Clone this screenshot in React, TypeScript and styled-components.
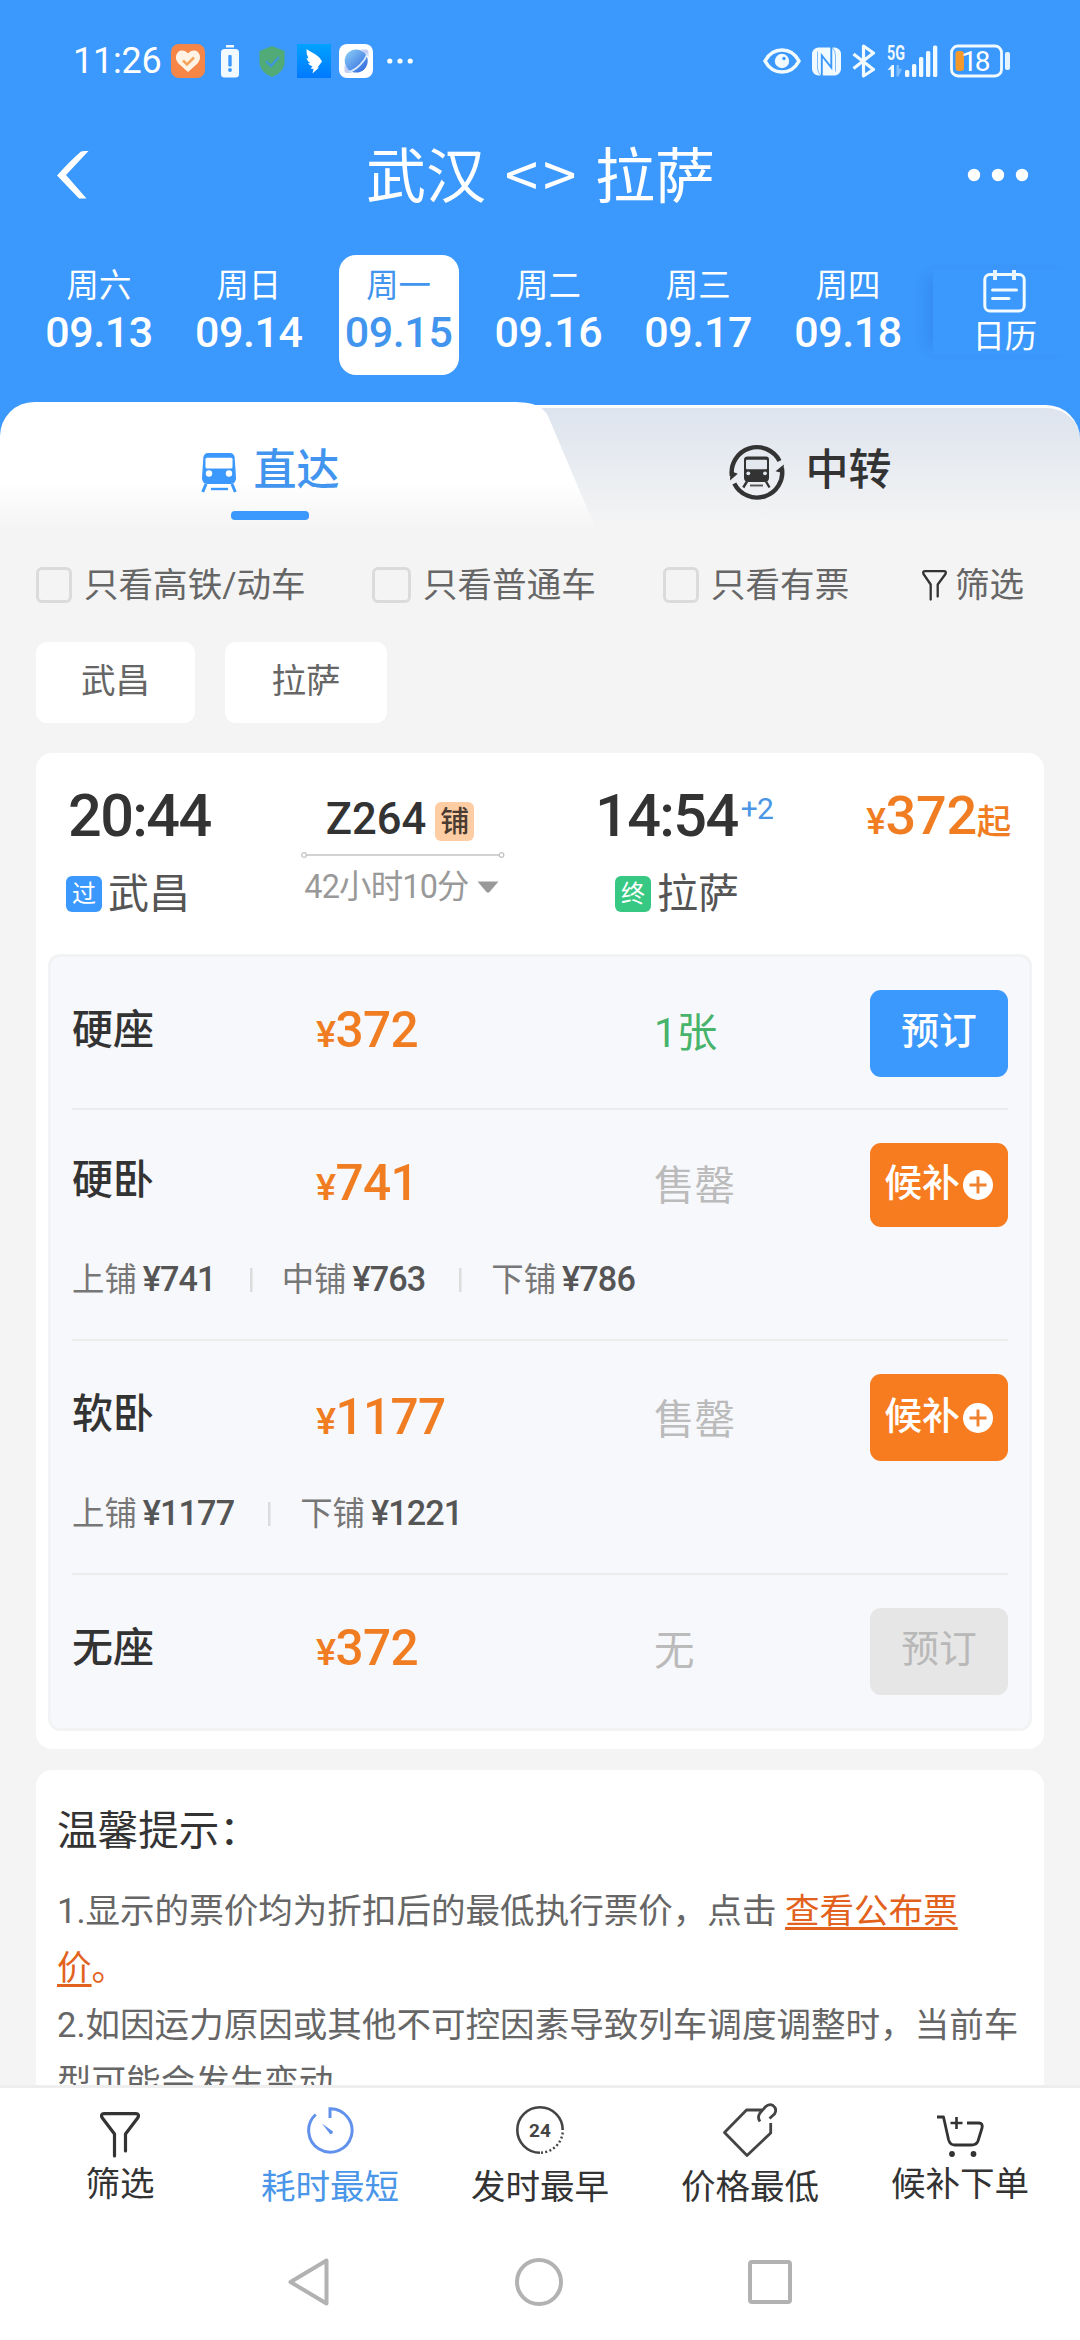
import React from 'react';
import styled, { createGlobalStyle, css } from 'styled-components';

const BLUE = '#3b98fc';
const ORANGE = '#f07d22';

const GlobalStyle = createGlobalStyle`
  * { box-sizing: border-box; }
  body { margin: 0; background: #f4f4f4; }
  svg { display: block; flex: none; }
`;

const Screen = styled.div`
  width: 1080px;
  height: 2340px;
  display: flex;
  flex-direction: column;
  overflow: hidden;
  background: #f4f4f4;
  color: #333;
  font-family: Roboto, 'Noto Sans CJK SC', sans-serif;
`;

/* ---------- header ---------- */

const Header = styled.header`
  flex: none;
  height: 402px;
  background: ${BLUE};
  color: #fff;
`;

const StatusBar = styled.div`
  height: 122px;
  padding: 0 70px 0 73px;
  display: flex;
  align-items: center;
  justify-content: space-between;
`;

const StatusGroup = styled.div<{ $gap: number }>`
  display: flex;
  align-items: center;
  gap: ${(p) => p.$gap}px;
`;

const AlertGroup = styled(StatusGroup)`
  margin: 0 4px 0 8px;
`;

const Clock = styled.span`
  width: 90px;
  font-size: 36px;
  line-height: 40px;
  letter-spacing: -0.2px;
`;

const TitleBar = styled.div`
  height: 106px;
  padding: 0 51px 0 57px;
  display: flex;
  align-items: center;
  justify-content: space-between;
`;

const Title = styled.h1`
  margin: 0 0 0 24px;
  font-size: 60px;
  line-height: 80px;
  font-weight: 400;
  white-space: nowrap;
`;

const Angles = styled.span`
  display: inline-block;
  width: 109px;
  text-align: center;
  font-family: 'Noto Sans CJK SC', sans-serif;
  letter-spacing: 5px;
  text-indent: 5px;
`;

const DateStrip = styled.div`
  margin-top: 27px;
  padding-left: 39px;
  display: flex;
  align-items: flex-start;
  gap: 29.8px;
`;

const DateItem = styled.div<{ $active?: boolean }>`
  flex: none;
  width: 120px;
  height: 120px;
  padding-top: 13px;
  border-radius: 17px;
  display: flex;
  flex-direction: column;
  align-items: center;
  gap: 3px;
  background: ${(p) => (p.$active ? '#fff' : 'transparent')};
  color: ${(p) => (p.$active ? '#4295ee' : '#fff')};
`;

const Weekday = styled.span`
  font-size: 32.4px;
  line-height: 36px;
`;

const DayNumber = styled.span`
  font-size: 43px;
  line-height: 50px;
  font-weight: 500;
  letter-spacing: -0.4px;
`;

const CalendarButton = styled.div`
  flex: none;
  width: 144px;
  height: 84px;
  margin: 15px 0 0 -5px;
  display: flex;
  flex-direction: column;
  align-items: center;
  gap: 6px;
  background: ${BLUE};
  box-shadow: -11px 0 14px -7px rgba(20, 60, 160, 0.16);
`;

/* ---------- tabs ---------- */

const Tabs = styled.nav`
  flex: none;
  height: 138px;
  display: flex;
  background: linear-gradient(${BLUE} 60px, #f4f4f4 60px);
`;

const tabBase = css`
  width: 540px;
  position: relative;
  display: flex;
  justify-content: center;
  padding-top: 38px;
  font-size: 43px;
  line-height: 60px;
  font-weight: 500;
`;

const ActiveTab = styled.div`
  ${tabBase}
  z-index: 1;
  color: #4295ee;
  gap: 17px;
  &::before {
    content: '';
    position: absolute;
    z-index: -1;
    left: 0;
    top: 0;
    width: 600px;
    height: 138px;
    background: linear-gradient(#fff 80px, #f4f4f4 128px);
    clip-path: path('M0 138V34A34 34 0 0 1 34 0H512C534 0 542 4 548 14L595 125L600 138Z');
  }
  &::after {
    content: '';
    position: absolute;
    left: 231px;
    top: 109px;
    width: 78px;
    height: 9px;
    border-radius: 4px;
    background: ${BLUE};
  }
`;

const IdleTab = styled.div`
  ${tabBase}
  gap: 21px;
  &::before {
    content: '';
    position: absolute;
    z-index: 0;
    left: -40px;
    right: 0;
    top: 3px;
    height: 135px;
    border-top: 3px solid #fff;
    border-radius: 0 34px 0 0;
    background: linear-gradient(#dde4ee, #f4f4f4 118px);
  }
  > * { position: relative; }
`;

const TabIcon = styled.span<{ $top: number }>`
  padding-top: ${(p) => p.$top}px;
`;

/* ---------- filters ---------- */

const Filters = styled.div`
  flex: none;
  height: 65px;
  padding: 25px 0 0 36px;
  display: grid;
  grid-template-columns: 336px 291px 259px 1fr;
  align-items: center;
  color: #666;
  font-size: 34.56px;
  line-height: 40px;
`;

const CheckOption = styled.label`
  display: flex;
  align-items: center;
  white-space: nowrap;
`;

const CheckBox = styled.i<{ $w: number }>`
  width: ${(p) => p.$w}px;
  height: 36px;
  margin-right: 12px;
  border: 3px solid #dbdbdb;
  border-radius: 6px;
`;

const FilterLink = styled.div`
  display: flex;
  align-items: center;
  gap: 8px;
`;

const Chips = styled.div`
  flex: none;
  margin-top: 37px;
  padding-left: 36px;
  display: flex;
  gap: 30px;
`;

const Chip = styled.div<{ $w: number }>`
  width: ${(p) => p.$w}px;
  height: 81px;
  padding-bottom: 3px;
  border-radius: 11px;
  background: #fff;
  color: #666;
  display: flex;
  align-items: center;
  justify-content: center;
  font-size: 34.56px;
  line-height: 40px;
`;

/* ---------- train card ---------- */

const Card = styled.section`
  flex: none;
  margin: 30px 36px 0;
  height: 996px;
  border-radius: 16px;
  background: #fff;
`;

const TrainHead = styled.div`
  height: 201px;
  padding: 33px 33px 0 30px;
  display: grid;
  grid-template-columns: 235px 203px 87px 220px 1fr;
`;

const Stop = styled.div`
  display: flex;
  flex-direction: column;
  gap: 30px;
`;

const ArriveStop = styled(Stop)`
  grid-column: 4;
`;

const Time = styled.div<{ $indent: number }>`
  display: flex;
  align-items: flex-start;
  padding-left: ${(p) => p.$indent}px;
  font-size: 59.4px;
  line-height: 60px;
  font-weight: 500;
  letter-spacing: -1.6px;
  white-space: nowrap;
`;

const DayOffset = styled.span`
  margin-left: 3px;
  padding-top: 5px;
  color: #4a96e4;
  font-size: 30px;
  line-height: 36px;
  font-weight: 400;
  letter-spacing: -0.8px;
`;

const Station = styled.div<{ $indent?: number }>`
  height: 36px;
  padding-left: ${(p) => p.$indent ?? 0}px;
  display: flex;
  align-items: center;
  gap: 6px;
  color: #555;
  font-size: 41px;
  line-height: 38px;
`;

const StationBadge = styled.span<{ $color: string }>`
  width: 36px;
  height: 36px;
  border-radius: 6px;
  background: ${(p) => p.$color};
  color: #fff;
  font-size: 24px;
  line-height: 37px;
  text-align: center;
`;

const Middle = styled.div`
  display: flex;
  flex-direction: column;
  align-items: center;
`;

const TrainNo = styled.div`
  height: 63px;
  padding: 4px 5px 0 0;
  display: flex;
  align-items: center;
  gap: 9px;
  font-size: 43.6px;
  line-height: 50px;
  font-weight: 500;
`;

const BerthBadge = styled.span`
  width: 39px;
  height: 39px;
  margin-top: 3px;
  border-radius: 6px;
  background: #ffcda3;
  color: #4a3c32;
  font-size: 29px;
  line-height: 40px;
  font-weight: 500;
  text-align: center;
`;

const Duration = styled.div`
  padding: 4px 2px 0 0;
  display: flex;
  align-items: center;
  gap: 8px;
  color: #999;
  font-size: 32.4px;
  line-height: 44px;
  letter-spacing: -0.8px;
  white-space: nowrap;
`;

const FromPrice = styled.div`
  display: flex;
  align-items: baseline;
  justify-content: flex-end;
  height: 60px;
  color: ${ORANGE};
  font-size: 54px;
  line-height: 60px;
  font-weight: 500;
  letter-spacing: -0.3px;
  white-space: nowrap;
`;

const PriceUnit = styled.span<{ $size: number }>`
  font-size: ${(p) => p.$size}px;
  font-weight: 500;
`;

/* ---------- seats ---------- */

const SeatPanel = styled.div`
  margin: 0 12px;
  height: 777px;
  padding: 0 21px;
  border: 3px solid #f2f3f5;
  border-radius: 12px;
  background: #f7f8fc;
`;

const SeatRow = styled.div<{ $h: number }>`
  height: ${(p) => p.$h}px;
  padding-top: 33px;
  border-bottom: 2px solid #ececec;
  &:last-child { border-bottom: 0; }
`;

const SeatMain = styled.div<{ $h: number }>`
  height: ${(p) => p.$h}px;
  display: grid;
  grid-template-columns: 244px 338px 1fr 138px;
  align-items: start;
`;

const SeatName = styled.div<{ $top: number }>`
  padding-top: ${(p) => p.$top}px;
  font-size: 41px;
  line-height: 50px;
  font-weight: 500;
`;

const SeatPrice = styled.div<{ $top: number }>`
  padding-top: ${(p) => p.$top}px;
  color: ${ORANGE};
  font-size: 49.5px;
  line-height: 50px;
  font-weight: 500;
  letter-spacing: -0.6px;
`;

const SeatStatus = styled.div<{ $top: number; $available?: boolean }>`
  padding-top: ${(p) => p.$top}px;
  color: ${(p) => (p.$available ? '#47b36b' : '#bbb')};
  font-size: 40.5px;
  line-height: 50px;
`;

type ActionKind = 'book' | 'wait' | 'off';

const actionColors: Record<ActionKind, string> = {
  book: `background: ${BLUE}; color: #fff; padding-bottom: 6px;`,
  wait: 'background: #f67c1f; color: #fff; padding-bottom: 4px;',
  off: 'background: #e6e6e6; color: #b8b8b8; font-weight: 400; padding-bottom: 6px;',
};

const ActionButton = styled.button<{ $kind: ActionKind }>`
  width: 138px;
  height: 100%;
  padding: 0;
  border: 0;
  border-radius: 11px;
  display: flex;
  align-items: center;
  justify-content: center;
  gap: 2px;
  font-family: inherit;
  font-size: 37.8px;
  line-height: 50px;
  font-weight: 500;
  ${(p) => actionColors[p.$kind]}
`;

const PlusMark = styled.svg`
  margin-top: 4px;
`;

const Berths = styled.div`
  margin-top: 30px;
  display: flex;
  align-items: center;
  color: #777;
  font-size: 32.4px;
  line-height: 44px;
`;

const Berth = styled.span`
  display: flex;
  align-items: baseline;
  gap: 6px;
  & + & {
    margin-left: 34px;
    padding-left: 32px;
    background: linear-gradient(#dcdcdc, #dcdcdc) no-repeat 0 50% / 2.5px 24px;
  }
`;

const BerthPrice = styled.b`
  color: #555;
  font-size: 34.2px;
  font-weight: 500;
  letter-spacing: -0.9px;
`;

/* ---------- tips ---------- */

const Tips = styled.section`
  flex: 1;
  min-height: 0;
  overflow: hidden;
  margin: 21px 36px 0;
  padding: 35px 20px 0 21px;
  border-radius: 16px 16px 0 0;
  background: #fff;
`;

const TipsTitle = styled.h2`
  margin: 0 0 26px;
  font-size: 40.6px;
  line-height: 52px;
  font-weight: 400;
  color: #333;
`;

const TipLine = styled.p`
  margin: 0;
  color: #666;
  font-size: 34.56px;
  line-height: 57px;
`;

const TipLink = styled.span`
  color: #e2621d;
`;

const Underlined = styled.span`
  text-decoration: underline;
  text-decoration-thickness: 3px;
  text-underline-offset: 4px;
`;

/* ---------- bottom ---------- */

const SortBar = styled.footer`
  flex: none;
  height: 135px;
  padding: 0 15px;
  border-top: 3px solid #eeeeee;
  background: #fff;
  display: grid;
  grid-template-columns: repeat(5, 210px);
`;

const SortItem = styled.div<{ $active?: boolean; $shift: number }>`
  display: flex;
  flex-direction: column;
  align-items: center;
  color: ${(p) => (p.$active ? '#4a96e8' : '#333')};
  font-size: 34.56px;
  line-height: 40px;
  > span { margin-top: ${(p) => p.$shift}px; }
`;

const SortIcon = styled.div<{ $lift?: number }>`
  height: 70px;
  padding-bottom: ${(p) => p.$lift ?? 0}px;
  display: flex;
  align-items: flex-end;
`;

const SystemNav = styled.div`
  flex: none;
  height: 120px;
  padding: 3px 288px 0 287px;
  background: #fff;
  display: flex;
  justify-content: space-between;
  align-items: center;
`;

/* ---------- icons ---------- */

const HeartApp = () => (
  <svg width="34" height="34" viewBox="0 0 34 34">
    <rect width="34" height="34" rx="8" fill="#f58648" />
    <path d="M17 28L7.500 19.500C2.500 14 5.500 6.500 11 6.500c3 0 5 1.500 6 3 1-1.500 3-3 6-3 5.500 0 8.500 7.500 3.500 13z" fill="#fff3e6" />
    <path d="M12 16.500l4 4 7-7" fill="none" stroke="#f5a45c" strokeWidth="2.600" />
  </svg>
);

const BatteryAlert = () => (
  <svg width="18" height="33" viewBox="0 0 18 33">
    <rect x="5" y="0" width="8" height="2.500" fill="#f0faff" />
    <rect y="4" width="18" height="28.500" rx="3.500" fill="#f0faff" />
    <rect x="7.300" y="10" width="3.400" height="11.500" rx="1" fill={BLUE} />
    <circle cx="9" cy="25" r="1.900" fill={BLUE} />
  </svg>
);

const Shield = () => (
  <svg width="26" height="31" viewBox="0 0 26 31">
    <path d="M13 0L25.500 5v11c0 7-5 12-12.500 15C5.500 28 .5 23 .5 16V5z" fill="#51ab76" />
    <path d="M7 15l5 5 8-9" fill="none" stroke="#3f97d8" strokeWidth="2.400" />
  </svg>
);

const WingApp = () => (
  <svg width="34" height="34" viewBox="0 0 34 34">
    <defs>
      <linearGradient id="wing" x1="0" y1="0" x2="0" y2="1">
        <stop offset="0" stopColor="#00a2ff" />
        <stop offset="1" stopColor="#0079ff" />
      </linearGradient>
    </defs>
    <rect width="34" height="34" fill="url(#wing)" />
    <path d="M9.500 5C15 9 22 11 25 17.500L20.500 23.500H22L15.500 29.500 16.500 25 13.500 24.500 15.500 22.500Q12 21.500 11 19L13.500 19.200Q10 17 9.500 14L11.500 14.500Q9 9.500 9.500 5z" fill="#fff" />
  </svg>
);

const GlobeApp = () => (
  <svg width="34" height="34" viewBox="0 0 34 34">
    <defs>
      <linearGradient id="globe" x1="0" y1="0" x2="1" y2="1">
        <stop offset="0" stopColor="#8fd2f8" />
        <stop offset="1" stopColor="#2b62dc" />
      </linearGradient>
    </defs>
    <rect width="34" height="34" rx="8" fill="#fff" />
    <path d="M22 5.500H27Q29.500 5.500 29.500 8V13zM5.500 21V26.500Q5.500 29 8 29H13z" fill="#c3cdf5" />
    <circle cx="17.200" cy="17" r="11.500" fill="url(#globe)" />
    <path d="M28.500 9.500C26 17 18 25.500 10 28" fill="none" stroke="#d5eafd" strokeWidth="1.800" />
  </svg>
);

const Dots = ({ w, h, r, gap }: { w: number; h: number; r: number; gap: number }) => (
  <svg width={w} height={h} viewBox={`0 0 ${w} ${h}`} fill="#fff">
    {[-1, 0, 1].map((i) => (
      <circle key={i} cx={w / 2 + i * gap} cy={h / 2} r={r} />
    ))}
  </svg>
);

const Eye = () => (
  <svg width="38" height="26" viewBox="0 0 38 26">
    <path d="M2 13C6 5.500 12 2 19 2s13 3.500 17 11c-4 7.500-10 11-17 11S6 20.500 2 13z" fill="none" stroke="#f0faff" strokeWidth="3.600" />
    <circle cx="19" cy="13" r="7.200" fill="#f0faff" />
    <circle cx="21" cy="10.500" r="1.700" fill={BLUE} />
  </svg>
);

const Nfc = () => (
  <svg width="29" height="29" viewBox="0 0 29 29">
    <rect x="0" y="0.500" width="29" height="28" rx="6.500" fill="#f0faff" />
    <path d="M5.500 4.500V21Q5.500 25.500 9.300 29M23.500 24.500V8Q23.500 3.500 19.700 0" fill="none" stroke={BLUE} strokeWidth="0.900" opacity="0.700" />
    <path d="M9.800 29V8.500L19.300 20.500V0" fill="none" stroke={BLUE} strokeWidth="1.900" />
  </svg>
);

const BluetoothIcon = () => (
  <svg width="24" height="34" viewBox="0 0 24 34">
    <path d="M1.500 10L21.500 25.500 11.500 32V2L21.500 9 1.500 24.500" fill="none" stroke="#f0faff" strokeWidth="3.200" strokeLinejoin="round" />
  </svg>
);

const Signal = () => (
  <svg width="52" height="34" viewBox="0 0 52 34">
    <text x="0" y="15.500" fontSize="19.500" fontWeight="700" fill="#f0faff" textLength="18" lengthAdjust="spacingAndGlyphs" fontFamily="Roboto, sans-serif">5G</text>
    <path d="M0.500 26L5 21h2v12H3.800V25.500z" fill="#f0faff" />
    <path d="M9.500 21h2.500v3.500l3 .5-3.500 7.500h-2z" fill="#7bbcff" />
    {[26, 20, 13, 7, 1.5].map((y, i) => (
      <rect key={y} x={18 + i * 7} y={y} width="4.300" height={33 - y} rx="1.500" fill="#f0faff" />
    ))}
  </svg>
);

const Battery = () => (
  <svg width="60" height="34" viewBox="0 0 60 34">
    <rect x="1.500" y="2" width="50" height="30" rx="6.500" fill="none" stroke="#f0faff" strokeWidth="2.800" />
    <rect x="5.500" y="7" width="8.500" height="20" rx="3" fill="#f59a2a" />
    <rect x="55" y="8" width="5" height="18" rx="2" fill="#e4f3ff" />
    <text x="11.500" y="27" fontSize="28" fill="#fff" textLength="29" fontFamily="Roboto, sans-serif">18</text>
  </svg>
);

const BackIcon = () => (
  <svg width="33" height="48" viewBox="0 0 33 48">
    <path d="M27.500 0H31.500L9 24 29.500 47.500H22L0 24.500Q14 9 24 0.500Z" fill="#fff" />
  </svg>
);

const CalendarIcon = () => (
  <svg width="43" height="43" viewBox="0 0 43 43" fill="none" stroke="#f0faff" strokeWidth="3">
    <rect x="1.800" y="4.500" width="39.400" height="36.500" rx="5" />
    <path d="M12 0v10M31 0v10" stroke="#e8f5ff" strokeWidth="4" />
    <path d="M9.500 20h24M9.500 28.500H26" strokeLinecap="round" />
  </svg>
);

const TrainIcon = () => (
  <svg width="36" height="40" viewBox="0 0 36 40">
    <path d="M7 0h22c3 0 4.500 2 4.700 5L35 25c0 3-2 6-5 6H6c-3 0-5-3-5-6L2.300 5C2.500 2 4 0 7 0z" fill={BLUE} />
    <rect x="4.500" y="4.800" width="27" height="10.700" rx="1.500" fill="#fff" />
    <circle cx="8" cy="20.500" r="3.200" fill="#fff" />
    <circle cx="28" cy="20.500" r="3.200" fill="#fff" />
    <path d="M5 31L1.700 39M31 31l3.300 8" stroke={BLUE} strokeWidth="3" />
    <path d="M10 36h17" stroke={BLUE} strokeWidth="2.400" />
  </svg>
);

const TransferIcon = () => (
  <svg width="56" height="56" viewBox="0 0 56 56">
    <g fill="none" stroke="#333" strokeWidth="4.400">
      <path d="M50.500 17A25.300 25.300 0 0 0 2.900 32" />
      <path d="M5.300 39.500A25.300 25.300 0 0 0 52.900 24" />
    </g>
    <path d="M1 36.500L8.800 29.800 1.500 27zM54.800 20.500l-8.300 6.800 8 2z" fill="#333" />
    <path d="M18.500 12.500h18.500c2 0 3 1.200 3 3V34c0 2.500-2 4-4 4H19c-2 0-4-1.500-4-4V15.500c0-1.800 1.500-3 3.500-3z" fill="#333" />
    <rect x="17" y="15.800" width="21" height="9.500" rx="1" fill="#e3e8ee" />
    <circle cx="19.300" cy="29.300" r="1.900" fill="#e3e8ee" />
    <circle cx="36" cy="29.300" r="1.900" fill="#e3e8ee" />
    <path d="M18 37.500L14.300 43.500M37 37.500l3.500 6" stroke="#333" strokeWidth="2.400" />
    <path d="M21 41.500h13" stroke="#555" strokeWidth="1.900" />
  </svg>
);

const FunnelIcon = ({ small }: { small?: boolean }) => (
  <svg width={small ? 25 : 40} height={small ? 31 : 46} viewBox={small ? '0 0 25 31' : '0 0 40 46'} fill="none" stroke="#333" strokeLinecap="round" strokeLinejoin="round">
    {small ? (
      <path strokeWidth="2.300" d="M8.700 29.500V14.500L1.500 4Q.5 1.200 3 1.200H22Q24.500 1.200 23.500 4L15.700 14.500V26.500" />
    ) : (
      <path strokeWidth="3.200" d="M14.500 44V22L2 5.500Q.5 1.700 4 1.700H36Q39.500 1.700 38 5.500L25.500 22V39" />
    )}
  </svg>
);

const TimerIcon = () => (
  <svg width="48" height="48" viewBox="0 0 48 48">
    <path d="M24 12V2.800A21.700 21.700 0 1 1 9.700 8.500" fill="none" stroke="#6191ec" strokeWidth="3" />
    <path d="M16 17.500L27 25.500Q27 28.500 24 28z" fill="#6191ec" />
  </svg>
);

const ClockIcon = () => (
  <svg width="48" height="48" viewBox="0 0 48 48">
    <path d="M24 46.700A22.700 22.700 0 1 1 46.700 24" fill="none" stroke="#444" strokeWidth="2.600" />
    <path d="M46.700 26.500A22.700 22.700 0 0 1 25 46.700" fill="none" stroke="#444" strokeWidth="2.400" strokeDasharray="2 2.300" />
    <text x="24" y="31" textAnchor="middle" fontSize="19" fontWeight="700" fill="#444" fontFamily="Roboto, sans-serif">24</text>
  </svg>
);

const TagIcon = () => (
  <svg width="54" height="54" viewBox="0 0 54 54" fill="none" stroke="#444" strokeWidth="2.800" strokeLinejoin="round">
    <path d="M39 7H23.500L1.500 29.500 24 52.500 47.700 30V20" />
    <path d="M37 18.500Q34 14.500 37 10L42.500 3.800Q46 0.300 50 2.500 54.500 6 51.500 11L46.500 15.500" />
  </svg>
);

const CartIcon = () => (
  <svg width="47" height="43" viewBox="0 0 47 43" fill="none" stroke="#333" strokeWidth="2.800" strokeLinejoin="round">
    <path d="M0 2H6.500L11.500 24.500Q13 30 17.500 30H34.500Q39.500 30 41 26L45 13Q46 8 42 8H30" />
    <path d="M19.500 2v12M13.500 8h12" strokeWidth="2.600" />
    <circle cx="15" cy="39" r="2.900" fill="#333" stroke="none" />
    <circle cx="36.500" cy="39" r="2.900" fill="#333" stroke="none" />
  </svg>
);

const PlusCircle = () => (
  <PlusMark width="32" height="32" viewBox="0 0 32 32">
    <circle cx="16" cy="16" r="15" fill="#fff" />
    <path d="M16 7.500v17M7.500 16h17" stroke="#f0822f" strokeWidth="2.900" />
  </PlusMark>
);

/* ---------- data ---------- */

const days = [
  ['周六', '09.13'],
  ['周日', '09.14'],
  ['周一', '09.15'],
  ['周二', '09.16'],
  ['周三', '09.17'],
  ['周四', '09.18'],
];

type Seat = {
  name: string;
  price: string;
  status: string;
  available?: boolean;
  kind: ActionKind;
  height: number;
  button: number;
  tops: [number, number, number];
  berths?: [string, string][];
};

const seats: Seat[] = [
  { name: '硬座', price: '372', status: '1张', available: true, kind: 'book', height: 153, button: 87, tops: [15, 15, 18] },
  {
    name: '硬卧', price: '741', status: '售罄', kind: 'wait', height: 231, button: 84, tops: [12, 15, 18],
    berths: [['上铺', '741'], ['中铺', '763'], ['下铺', '786']],
  },
  {
    name: '软卧', price: '1177', status: '售罄', kind: 'wait', height: 234, button: 87, tops: [15, 18, 21],
    berths: [['上铺', '1177'], ['下铺', '1221']],
  },
  { name: '无座', price: '372', status: '无', kind: 'off', height: 153, button: 87, tops: [15, 15, 18] },
];

export default function App() {
  return (
    <Screen>
      <GlobalStyle />
      <Header>
        <StatusBar>
          <StatusGroup $gap={8}>
            <Clock>11:26</Clock>
            <HeartApp />
            <AlertGroup $gap={20}>
              <BatteryAlert />
              <Shield />
            </AlertGroup>
            <WingApp />
            <GlobeApp />
            <Dots w={38} h={10} r={2.6} gap={10.2} />
          </StatusGroup>
          <StatusGroup $gap={11}>
            <Eye />
            <Nfc />
            <BluetoothIcon />
            <Signal />
            <Battery />
          </StatusGroup>
        </StatusBar>
        <TitleBar>
          <BackIcon />
          <Title>
            武汉<Angles>&lt;&gt;</Angles>拉萨
          </Title>
          <Dots w={62} h={14} r={6.2} gap={24} />
        </TitleBar>
        <DateStrip>
          {days.map(([w, d], i) => (
            <DateItem key={d} $active={i === 2}>
              <Weekday>{w}</Weekday>
              <DayNumber>{d}</DayNumber>
            </DateItem>
          ))}
          <CalendarButton>
            <CalendarIcon />
            <Weekday>日历</Weekday>
          </CalendarButton>
        </DateStrip>
      </Header>

      <Tabs>
        <ActiveTab>
          <TabIcon $top={13}><TrainIcon /></TabIcon>
          <span>直达</span>
        </ActiveTab>
        <IdleTab>
          <TabIcon $top={4}><TransferIcon /></TabIcon>
          <span>中转</span>
        </IdleTab>
      </Tabs>

      <Filters>
        <CheckOption><CheckBox $w={36} />只看高铁/动车</CheckOption>
        <CheckOption><CheckBox $w={39} />只看普通车</CheckOption>
        <CheckOption><CheckBox $w={36} />只看有票</CheckOption>
        <FilterLink><FunnelIcon small />筛选</FilterLink>
      </Filters>
      <Chips>
        <Chip $w={159}>武昌</Chip>
        <Chip $w={162}>拉萨</Chip>
      </Chips>

      <Card>
        <TrainHead>
          <Stop>
            <Time $indent={2}>20:44</Time>
            <Station><StationBadge $color={BLUE}>过</StationBadge>武昌</Station>
          </Stop>
          <Middle>
            <TrainNo>Z264<BerthBadge>铺</BerthBadge></TrainNo>
            <svg width="204" height="12" viewBox="0 0 204 12" fill="none" stroke="#c4c4c4" strokeWidth="1.300">
              <circle cx="3" cy="6" r="2.300" />
              <circle cx="200.500" cy="6" r="2.300" />
              <path d="M5.300 6H198.200" />
            </svg>
            <Duration>
              42小时10分
              <svg width="22" height="12" viewBox="0 0 22 12"><path d="M0.500 0.500h21L12.500 11q-1.500 1.500-3 0z" fill="#999" /></svg>
            </Duration>
          </Middle>
          <ArriveStop>
            <Time $indent={4}>14:54<DayOffset>+2</DayOffset></Time>
            <Station $indent={24}><StationBadge $color="#37c884">终</StationBadge>拉萨</Station>
          </ArriveStop>
          <FromPrice>
            <PriceUnit $size={37}>¥</PriceUnit>372<PriceUnit $size={34.5}>起</PriceUnit>
          </FromPrice>
        </TrainHead>
        <SeatPanel>
          {seats.map((s) => (
            <SeatRow key={s.name} $h={s.height}>
              <SeatMain $h={s.button}>
                <SeatName $top={s.tops[0]}>{s.name}</SeatName>
                <SeatPrice $top={s.tops[1]}><PriceUnit $size={37.8}>¥</PriceUnit>{s.price}</SeatPrice>
                <SeatStatus $top={s.tops[2]} $available={s.available}>{s.status}</SeatStatus>
                <ActionButton $kind={s.kind}>
                  {s.kind === 'wait' ? '候补' : '预订'}
                  {s.kind === 'wait' && <PlusCircle />}
                </ActionButton>
              </SeatMain>
              {s.berths && (
                <Berths>
                  {s.berths.map(([label, price]) => (
                    <Berth key={label}>{label}<BerthPrice>¥{price}</BerthPrice></Berth>
                  ))}
                </Berths>
              )}
            </SeatRow>
          ))}
        </SeatPanel>
      </Card>

      <Tips>
        <TipsTitle>温馨提示：</TipsTitle>
        <TipLine>
          1.显示的票价均为折扣后的最低执行票价，点击 <TipLink><Underlined>查看公布票价</Underlined>。</TipLink>
        </TipLine>
        <TipLine>2.如因运力原因或其他不可控因素导致列车调度调整时，当前车型可能会发生变动</TipLine>
      </Tips>

      <SortBar>
        <SortItem $shift={6}><SortIcon><FunnelIcon /></SortIcon><span>筛选</span></SortItem>
        <SortItem $active $shift={9}><SortIcon $lift={4}><TimerIcon /></SortIcon><span>耗时最短</span></SortItem>
        <SortItem $shift={9}><SortIcon $lift={4}><ClockIcon /></SortIcon><span>发时最早</span></SortItem>
        <SortItem $shift={9}><SortIcon $lift={1}><TagIcon /></SortIcon><span>价格最低</span></SortItem>
        <SortItem $shift={6}><SortIcon><CartIcon /></SortIcon><span>候补下单</span></SortItem>
      </SortBar>
      <SystemNav>
        <svg width="43" height="50" viewBox="0 0 43 50" fill="none" stroke="#b2b2b2" strokeWidth="4" strokeLinejoin="round">
          <path d="M39.500 3.500V46.500L3.500 25z" />
        </svg>
        <svg width="50" height="50" viewBox="0 0 50 50" fill="none" stroke="#b2b2b2" strokeWidth="4">
          <circle cx="25" cy="25" r="22" />
        </svg>
        <svg width="44" height="44" viewBox="0 0 44 44" fill="none" stroke="#b2b2b2" strokeWidth="4">
          <rect x="2" y="2" width="40" height="40" rx="2" />
        </svg>
      </SystemNav>
    </Screen>
  );
}
